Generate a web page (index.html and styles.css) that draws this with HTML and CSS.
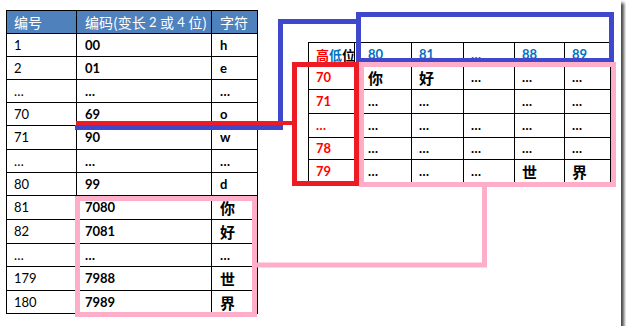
FILE: index.html
```html
<!DOCTYPE html>
<html lang="zh-CN">
<head>
<meta charset="utf-8">
<title>编码示意</title>
<link rel="stylesheet" href="styles.css">
</head>
<body>
<div class="frame">
  <div class="grid left">
    <div class="c hd"><span class="cj">编号</span></div>
    <div class="c hd"><span class="cj">编码(变长</span>&nbsp;2&nbsp;<span class="cj">或</span>&nbsp;4&nbsp;<span class="cj">位)</span></div>
    <div class="c hd"><span class="cj">字符</span></div>

    <div class="c">1</div><div class="c b">00</div><div class="c b">h</div>
    <div class="c">2</div><div class="c b">01</div><div class="c b">e</div>
    <div class="c">…</div><div class="c b">…</div><div class="c b">…</div>
    <div class="c">70</div><div class="c b">69</div><div class="c b">o</div>
    <div class="c">71</div><div class="c b">90</div><div class="c b">w</div>
    <div class="c">…</div><div class="c b">…</div><div class="c b">…</div>
    <div class="c">80</div><div class="c b">99</div><div class="c b">d</div>
    <div class="c">81</div><div class="c b">7080</div><div class="c b han">你</div>
    <div class="c">82</div><div class="c b">7081</div><div class="c b han">好</div>
    <div class="c">…</div><div class="c b">…</div><div class="c b">…</div>
    <div class="c">179</div><div class="c b">7988</div><div class="c b han">世</div>
    <div class="c">180</div><div class="c b">7989</div><div class="c b han">界</div>
  </div>

  <div class="grid right">
    <div class="c b"><span class="cj sm"><span class="red">高</span><span class="blue">低</span>位</span></div>
    <div class="c b blue wide">80</div>
    <div class="c b blue">81</div>
    <div class="c b blue">…</div>
    <div class="c b blue">88</div>
    <div class="c b blue">89</div>

    <div class="c b red">70</div><div class="c b han wide">你</div><div class="c b han">好</div><div class="c b">…</div><div class="c b">…</div><div class="c b">…</div>
    <div class="c b red">71</div><div class="c b wide">…</div><div class="c b">…</div><div class="c b"></div><div class="c b">…</div><div class="c b">…</div>
    <div class="c b red">…</div><div class="c b wide">…</div><div class="c b">…</div><div class="c b">…</div><div class="c b">…</div><div class="c b">…</div>
    <div class="c b red">78</div><div class="c b wide">…</div><div class="c b">…</div><div class="c b">…</div><div class="c b">…</div><div class="c b">…</div>
    <div class="c b red">79</div><div class="c b wide">…</div><div class="c b">…</div><div class="c b">…</div><div class="c b han">世</div><div class="c b han">界</div>
  </div>

  <svg class="overlay" width="621" height="326" viewBox="0 0 621 326" aria-hidden="true">
    <polyline class="blue-s" points="75,127.5 280.5,127.5 280.5,21.5 358,21.5"/>
    <rect class="blue-s" x="358.5" y="14.5" width="253" height="46"/>
    <line class="red-s thin" x1="76" y1="123" x2="294" y2="123"/>
    <rect class="red-s" x="294.5" y="64.5" width="62" height="119"/>
    <rect class="pink-s" x="361.5" y="64.5" width="252" height="120"/>
    <polyline class="pink-s" points="484.5,187 484.5,265 255,265"/>
    <rect class="pink-s" x="77.5" y="198.5" width="177" height="116"/>
  </svg>
</div>
</body>
</html>
```

FILE: styles.css
```css
html, body {
  margin: 0;
  padding: 0;
  background: #fff;
}

.frame {
  position: relative;
  width: 621px;
  height: 326px;
  background: #fff;
  box-shadow: 3px 3px 3px rgba(0, 0, 0, 0.72);
  display: flex;
  align-items: flex-start;
  font-family: "Lato", "Noto Sans CJK SC", sans-serif;
  font-size: 13px;
  color: #000;
}

.grid {
  display: grid;
  gap: 1px;
  padding: 1px;
  background: #000;
}

.left {
  margin: 10px 0 0 6px;
  grid-template-columns: 69px 134px 45px;
  grid-template-rows: 22px 22px 22px 22px 22px 23px 22px 22px 23px 23px 22px 23px 22px;
}

.right {
  margin: 42px 0 0 50px;
  grid-template-columns: 45px 56px 51px 50px 49px 45px;
  grid-template-rows: 22px 23px 23px 23px 21px 22px;
}

.c {
  background: #fff;
  display: flex;
  align-items: center;
  padding-left: 7px;
  line-height: 1;
  white-space: nowrap;
  overflow: hidden;
}

.left .c:nth-child(3n+2),
.left .c:nth-child(3n) {
  padding-left: 8px;
}

.c.wide {
  padding-left: 13px;
}

.hd {
  background: #4f81bd;
  color: #fff;
}

.cj {
  font-family: "Noto Sans CJK SC", sans-serif;
  font-size: 14px;
}

.cj.sm {
  font-size: 13px;
}

.b {
  font-weight: 700;
}

.han {
  font-family: "Noto Sans CJK SC", sans-serif;
  font-size: 15px;
}

.red {
  color: #ff0000;
}

.blue {
  color: #0070c0;
}

.overlay {
  position: absolute;
  left: 0;
  top: 0;
  pointer-events: none;
}

.overlay * {
  fill: none;
  stroke-width: 5;
  stroke-linejoin: miter;
}

.blue-s {
  stroke: #3f48cc;
}

.red-s {
  stroke: #ed1c24;
}

.red-s.thin {
  stroke-width: 4;
}

.pink-s {
  stroke: #ffaec9;
}
```
